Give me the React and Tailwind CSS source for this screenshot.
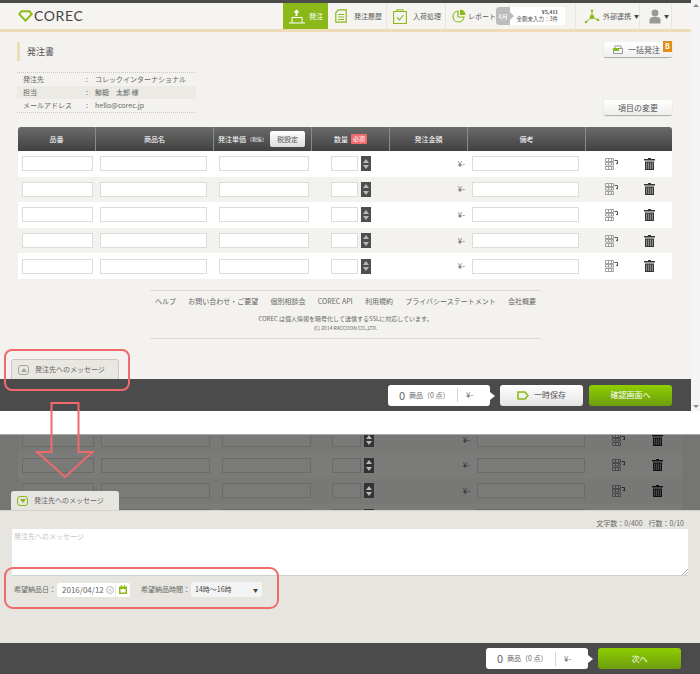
import React from "react";

const rows = [0, 1, 2, 3, 4];

function Spinner({ dim }) {
  return (
    <div className={`w-[10px] h-[15px] flex flex-col items-center justify-around py-[1px] ${dim ? "bg-[#333333]" : "bg-[#4e4e4e]"}`}>
      <span className="w-0 h-0 border-x-[3px] border-x-transparent border-b-[4px] border-b-[#b8b8b8]" />
      <span className="w-0 h-0 border-x-[3px] border-x-transparent border-t-[4px] border-t-[#b8b8b8]" />
    </div>
  );
}

function SplitIcon({ color = "#a0a0a0", arrow = "#555555" }) {
  return (
    <svg width="13" height="12" viewBox="0 0 13 12" fill="none" stroke={color} strokeWidth="1">
      <path d="M0.500 0.500h8v3h-8zM0.500 4.500h8v2.500h-8zM0.500 8.500h8v3h-8zM3.500 0.500v3M6.500 0.500v3M3.500 4.500v2.500M6.500 4.500v2.500M3.500 8.500v3M6.500 8.500v3" />
      <path d="M9.500 2.500h3v3.500M12.500 6l-1.500-1" stroke={arrow} />
    </svg>
  );
}

function TrashIcon({ color = "#333333", fill = "#8c8c8c" }) {
  return (
    <svg width="11" height="12" viewBox="0 0 11 12">
      <path d="M4 0h3v1h4v1.500H0V1h4z" fill={color} />
      <rect x="1.500" y="4" width="8" height="7.500" fill={fill} stroke={color} />
      <path d="M3.500 4v7.500M5.500 4v7.500M7.500 4v7.500" stroke={color} strokeWidth="0.8" />
    </svg>
  );
}

function Field({ className }) {
  return <div className={`h-[15px] bg-white border border-[#dcdcd8] ${className}`} />;
}

function OrderRow({ even }) {
  return (
    <div className={`grid grid-cols-[78px_118px_98px_78px_78px_118px_86px] items-center flex-1 ${even ? "bg-[#f3f2ee]" : "bg-white"}`}>
      <div className="pl-[4px]"><Field className="w-[71px]" /></div>
      <div className="pl-[4px]"><Field className="w-[107px]" /></div>
      <div className="pl-[5px]"><Field className="w-[90px]" /></div>
      <div className="pl-[19px] flex items-center gap-[3px]">
        <Field className="w-[27px]" />
        <Spinner />
      </div>
      <div className="pr-[3px] text-right text-[8px] text-[#666666]">¥-</div>
      <div className="pl-[4px]"><Field className="w-[107px]" /></div>
      <div className="pl-[19px] flex items-center gap-[26px]">
        <SplitIcon />
        <TrashIcon />
      </div>
    </div>
  );
}

function DimRow({ even, last }) {
  const box = "h-[15px] bg-[#7a7a78] border border-[#6a6a68]";
  return (
    <div className={`h-[25.5px] shrink-0 grid grid-cols-[80px_122px_100px_80px_77px_108px_97px] items-center ${even ? "bg-[#787876]" : "bg-[#7b7b79]"}`}>
      <div className="pl-[4px]"><div className={`${box} w-[72px]`} /></div>
      <div className="pl-[3px]"><div className={`${box} w-[109px]`} /></div>
      <div className="pl-[2px]"><div className={`${box} w-[89px]`} /></div>
      <div className="pl-[12px] flex items-center gap-[3px]">
        <div className={`${box} w-[29px]`} />
        <Spinner dim />
      </div>
      <div className="pr-[7px] text-right text-[8px] text-[#2c2c2c]">{last ? "" : "¥-"}</div>
      <div><div className={`${box} w-[108px]`} /></div>
      <div className="pl-[27px] flex items-center gap-[27px]">
        <SplitIcon color="#4a4a4a" arrow="#2c2c2c" />
        <TrashIcon color="#111111" fill="#444444" />
      </div>
    </div>
  );
}

function NavItem({ icon, label, className = "" }) {
  return (
    <div className={`h-full flex items-center border-r border-[#e6e5e0] ${className}`}>
      {icon}
      <span className="text-[7px] text-[#5c5c5c] whitespace-nowrap">{label}</span>
    </div>
  );
}

function Summary({ className = "" }) {
  return (
    <div className={`relative h-[21px] w-[102px] bg-white rounded-[3px] flex items-center text-[#666666] ${className}`}>
      <span className="ml-[11px] w-[9px] text-[11px] leading-none">0</span>
      <span className="ml-[1px] w-[48px] text-[7px] whitespace-nowrap">商品（0 点）</span>
      <span className="h-[14px] border-l border-[#d4d4d4]" />
      <span className="ml-[8px] text-[8px]">¥-</span>
      <span className="absolute left-full top-[7px] w-0 h-0 border-y-[4px] border-y-transparent border-l-[5px] border-l-white" />
    </div>
  );
}

function GreenButton({ label, className = "" }) {
  return (
    <div className={`h-[21px] w-[83px] rounded-[3px] bg-gradient-to-b from-[#8fce00] to-[#6c9e0c] flex items-center justify-center text-[8px] text-white ${className}`}>
      {label}
    </div>
  );
}

function Logo() {
  return (
    <div className="flex items-center gap-[1px] ml-[18px]">
      <svg width="15" height="12" viewBox="0 0 15 12" fill="none" stroke="#8cbc12" strokeWidth="2">
        <path d="M3.500 1.200h8l2.200 3L7.500 10.600 1.300 4.200z" />
      </svg>
      <span className="text-[14px] leading-none tracking-[0.6px] text-[#444444] font-['Lato',sans-serif]">COREC</span>
    </div>
  );
}

export default function App() {
  return (
    <div className="relative w-[700px] h-[674px] overflow-hidden bg-white font-['Noto_Sans_CJK_JP','Liberation_Sans',sans-serif]">
      {/* upper capture */}
      <div className="h-[411px] flex">
        <div className="w-[691px] flex flex-col bg-[#f3f2ee]">
          <div className="h-[3px] bg-[#4b4b4b]" />
          <div className="h-[26px] flex items-center bg-[#f5f4f1]">
            <div className="w-[283px]"><Logo /></div>
            <div className="h-full w-[45px] bg-[#8cb91a] flex items-center pl-[6px] gap-[3px]">
              <svg width="17" height="15" viewBox="0 0 17 15" fill="none" stroke="white" strokeWidth="1">
                <path d="M0 14h16M3 14V8.500h10V14" />
                <path d="M7.500 7V3" strokeWidth="2" />
                <path d="M4.500 3.500L7.500 0.500l3 3z" fill="white" stroke="none" />
              </svg>
              <span className="text-[7px] text-white whitespace-nowrap">発注</span>
            </div>
            <NavItem
              className="w-[59px] pl-[7px] gap-[7px]"
              label="発注履歴"
              icon={
                <svg width="12" height="14" viewBox="0 0 12 14" fill="none" stroke="#8cb91a" strokeWidth="1.2">
                  <path d="M3.500 0.800h7.700v12.400H0.800V3.500zM3 5.500h6M3 8h6M3 10.500h6" />
                </svg>
              }
            />
            <NavItem
              className="w-[59px] pl-[6px] gap-[6px]"
              label="入荷処理"
              icon={
                <svg width="14" height="15" viewBox="0 0 14 15" fill="none" stroke="#8cb91a" strokeWidth="1.1">
                  <path d="M0.600 2.500h12.800v12H0.600zM4 2.500V0.800h6v1.700M4 8.500l2.500 2.500 4-5" />
                </svg>
              }
            />
            <div className="h-full w-[130px] flex items-center border-r border-[#e6e5e0] pl-[6px]">
              <svg width="14" height="14" viewBox="0 0 14 14" fill="none" stroke="#8cb91a" strokeWidth="1.2">
                <path d="M6 2a5.500 5.500 0 1 0 6 6H6z" />
                <path d="M8 0.500a5.500 5.500 0 0 1 5.500 5.500H8z" fill="#8cb91a" stroke="none" />
              </svg>
              <span className="ml-[2px] w-[28px] text-[7px] text-[#5c5c5c] whitespace-nowrap">レポート</span>
              <div className="h-[18px] w-[69px] rounded-[3px] bg-white flex overflow-hidden">
                <div className="relative w-[14px] bg-[#bdbdbd] flex items-center justify-center text-[6px] text-white whitespace-nowrap">
                  4月
                </div>
                <span className="w-0 h-0 self-center border-y-[4px] border-y-transparent border-l-[4px] border-l-[#bdbdbd]" />
                <div className="flex-1 flex flex-col items-end justify-center pr-[7px] text-[#555555] leading-[7px]">
                  <span className="text-[6px] font-bold font-['Liberation_Serif',serif]">¥5,411</span>
                  <span className="text-[5.500px] whitespace-nowrap">金額未入力：3件</span>
                </div>
              </div>
            </div>
            <div className="h-full w-[64px] flex items-center border-r border-[#e6e5e0] pl-[8px] gap-[3px]">
              <svg width="16" height="15" viewBox="0 0 16 15" fill="#8cb91a" stroke="#8cb91a">
                <path d="M8 2v6M8 8L2 13M8 8l6 3" strokeWidth="1" fill="none" />
                <circle cx="8" cy="1.800" r="1.200" stroke="none" />
                <circle cx="8" cy="8" r="2.200" stroke="none" />
                <circle cx="2" cy="13" r="1.300" stroke="none" />
                <circle cx="14" cy="11" r="1.300" stroke="none" />
              </svg>
              <span className="text-[7px] text-[#5c5c5c] whitespace-nowrap">外部連携</span>
              <span className="text-[5px] text-[#444444]">▼</span>
            </div>
            <div className="h-full w-[32px] flex items-center border-r border-[#e6e5e0] pl-[9px] gap-[3px]">
              <svg width="12" height="15" viewBox="0 0 12 15" fill="#999999">
                <circle cx="6" cy="4" r="3.400" />
                <path d="M0.500 14.500V10.500Q1 8 4 8h4q3 0 3.500 2.500v4z" />
              </svg>
              <span className="text-[5px] text-[#444444]">▼</span>
            </div>
          </div>
          <div className="h-[3px] bg-[#eedcb9]" />

          <div className="flex-1 flex flex-col pl-[17px] pt-[10px]">
            <div className="flex justify-between items-start">
              <div className="h-[19px] border-l-[3px] border-[#eedcb9] pl-[7px] flex items-center text-[9px] text-[#555555]">発注書</div>
              <div className="relative mr-[19px] h-[15px] w-[68px] rounded-[2px] bg-gradient-to-b from-white to-[#eeeeee] shadow-[0_1px_1px_#aaaaaa] flex items-center pl-[9px] gap-[5px] text-[8px] text-[#555555] whitespace-nowrap">
                <svg width="10" height="9" viewBox="0 0 10 9" fill="none">
                  <path d="M0.500 3.500h9v5h-9zM2 3.500V1h6v2.500" stroke="#999999" />
                  <rect x="0" y="3" width="6" height="3" fill="#8cb91a" />
                </svg>
                一括発注
                <span className="absolute right-0 -top-[1px] w-[9px] h-[11px] bg-[#de8f14] text-white text-[7px] leading-[10px] text-center font-bold">B</span>
              </div>
            </div>
            <div className="flex justify-between items-end mt-[11px]">
              <div className="w-[179px] border-y border-dotted border-[#c9c9c4] text-[7px] text-[#666666]">
                {[
                  ["発注先", "コレックインターナショナル", ""],
                  ["担当", "鯨椴　太郎 様", "bg-[#ebeae4]"],
                  ["メールアドレス", "hello@corec.jp", ""],
                ].map(([k, v, bg]) => (
                  <div key={k} className={`h-[13px] flex items-center pl-[6px] whitespace-nowrap ${bg}`}>
                    <span className="w-[63px]">{k}</span>
                    <span className="w-[9px]">:</span>
                    <span>{v}</span>
                  </div>
                ))}
              </div>
              <div className="mr-[19px] -mb-[2px] h-[15px] w-[68px] rounded-[2px] bg-gradient-to-b from-white to-[#eeeeee] shadow-[0_1px_1px_#aaaaaa] flex items-center justify-center text-[8px] text-[#555555] whitespace-nowrap">項目の変更</div>
            </div>

            <div className="mt-[14px] ml-[1px] w-[654px] h-[152px] flex flex-col">
              <div className="h-[24px] shrink-0 rounded-t-[3px] bg-gradient-to-b from-[#6b6b6b] to-[#414141] grid grid-cols-[78px_118px_98px_78px_78px_118px_86px] text-[7px] text-white whitespace-nowrap">
                <div className="flex items-center justify-center border-r border-[#8a8a8a]">品番</div>
                <div className="flex items-center justify-center border-r border-[#8a8a8a]">商品名</div>
                <div className="flex items-center pl-[4px] border-r border-[#8a8a8a]">
                  発注単価<span className="ml-[1px] w-[21px] text-[5px]">（税抜）</span>
                  <span className="ml-[2px] h-[16px] w-[35px] rounded-[2px] bg-gradient-to-b from-white to-[#dddddd] text-[#555555] flex items-center justify-center">税設定</span>
                </div>
                <div className="flex items-center justify-center gap-[3px] border-r border-[#8a8a8a]">
                  数量<span className="h-[10px] px-[2px] rounded-[1px] bg-[#ef6a6c] text-[6px] leading-[10px]">必須</span>
                </div>
                <div className="flex items-center justify-center border-r border-[#8a8a8a]">発注金額</div>
                <div className="flex items-center justify-center border-r border-[#8a8a8a]">備考</div>
                <div />
              </div>
              {rows.map((i) => <OrderRow key={i} even={i % 2 === 1} />)}
            </div>

            <div className="mt-[11px] ml-[133px] w-[391px] border-y border-[#dcdbd6] h-[49px] flex flex-col items-center text-[#666666]">
              <div className="w-full flex justify-between px-[5px] pt-[3px] text-[7px] leading-[14px]">
                {["ヘルプ", "お問い合わせ・ご要望", "個別相談会", "COREC API", "利用規約", "プライバシーステートメント", "会社概要"].map((t) => (
                  <span key={t} className="whitespace-nowrap">{t}</span>
                ))}
              </div>
              <div className="mt-[6px] text-[6px] leading-[9px]">COREC は個人情報を暗号化して送信するSSLに対応しています。</div>
              <div className="text-[5px] leading-[9px]">(C) 2014 RACCOON CO.,LTD.</div>
            </div>

            <div className="mt-auto -ml-[6px] w-[108px] h-[20px] rounded-t-[3px] border border-b-0 border-[#c9c8c2] bg-[#e9e7e1] flex items-center pl-[6px] gap-[6px] text-[7px] text-[#666666] whitespace-nowrap">
              <span className="w-[11px] h-[10px] rounded-[3px] border border-[#a5a5a0] flex items-center justify-center">
                <span className="w-0 h-0 border-x-[3px] border-x-transparent border-b-[4px] border-b-[#a5a5a0]" />
              </span>
              発注先へのメッセージ
            </div>
          </div>

          <div className="h-[32px] shrink-0 bg-[#4b4b4b] flex items-center pl-[388px]">
            <Summary />
            <div className="ml-[10px] h-[21px] w-[83px] rounded-[3px] bg-gradient-to-b from-white to-[#e4e4e4] flex items-center justify-center gap-[5px] text-[8px] text-[#555555]">
              <svg width="12" height="9" viewBox="0 0 12 9" fill="none" stroke="#8cb91a" strokeWidth="1.6">
                <path d="M1 1h7l3 3.500L8 8H1z" />
              </svg>
              一時保存
            </div>
            <GreenButton label="確認画面へ" className="ml-[6px]" />
          </div>
        </div>
        <div className="w-[9px] bg-[#f4f4f4] flex flex-col items-center justify-between pt-[4px] pb-[3px]">
          <span className="w-0 h-0 border-x-[3px] border-x-transparent border-b-[3px] border-b-[#8a8a8a]" />
          <span className="w-0 h-0 border-x-[3px] border-x-transparent border-t-[3px] border-t-[#8a8a8a]" />
        </div>
      </div>

      <div className="h-[23px]" />

      {/* lower capture */}
      <div className="h-[240px] flex flex-col">
        <div className="relative h-[76px] overflow-hidden bg-[#757573] border-t border-[#a9a9a7] shrink-0">
          <div className="ml-[18px] w-[664px] -mt-[8px] flex flex-col">
            {[0, 1, 2, 3].map((i) => <DimRow key={i} even={i % 2 === 0} last={i === 3} />)}
          </div>
          <div className="absolute left-[11px] bottom-0 w-[108px] h-[19px] rounded-t-[3px] bg-[#e7e5e0] flex items-center pl-[6px] gap-[6px] text-[7px] text-[#666666] whitespace-nowrap">
            <span className="w-[11px] h-[10px] rounded-[3px] border border-[#8cb91a] flex items-center justify-center">
              <span className="w-0 h-0 border-x-[3px] border-x-transparent border-t-[4px] border-t-[#8cb91a]" />
            </span>
            発注先へのメッセージ
          </div>
        </div>
        <div className="flex-1 bg-[#e7e5e0] border-t border-[#d2d1cc] pl-[12px] pr-[12px]">
          <div className="h-[18px] flex justify-end items-end pb-[1px] pr-[4px] text-[7px] leading-[10px] text-[#666666] gap-[6px] whitespace-nowrap">
            <span>文字数：0/400</span>
            <span>行数：0/10</span>
          </div>
          <div className="relative h-[47px] bg-white border-b border-[#d2d1cc] rounded-[1px] pl-[2px] text-[7px] leading-[14px] text-[#c4c4c4]">
            発注先へのメッセージ
            <svg className="absolute right-0 bottom-0" width="6" height="6" viewBox="0 0 6 6" stroke="#999999" strokeWidth="0.8">
              <path d="M0 6L6 0M3 6l3-3" />
            </svg>
          </div>
          <div className="mt-[6px] h-[15px] pl-[2px] flex items-center text-[7px] text-[#666666] whitespace-nowrap">
            <span>希望納品日：</span>
            <div className="ml-[1px] w-[73px] h-[14px] rounded-[2px] bg-white flex items-center">
              <span className="ml-[5px] w-[44px] text-[8px]">2016/04/12</span>
              <span className="w-[8px] h-[8px] rounded-full border border-[#bbbbbb] text-[6px] leading-[6px] text-center text-[#aaaaaa]">×</span>
              <span className="ml-[1px] h-full pl-[3px] border-l border-[#e5e5e5] flex items-center">
                <svg width="8" height="9" viewBox="0 0 8 9" fill="#8cb91a">
                  <path d="M0 1.500h2V0h1v1.500h2V0h1v1.500h2V9H0zM1.500 4v3.500h5V4z" fillRule="evenodd" />
                </svg>
              </span>
            </div>
            <span className="ml-[11px]">希望納品時間：</span>
            <div className="ml-[1px] w-[71px] h-[15px] rounded-[2px] bg-[#f4f4f4] flex items-center justify-between px-[4px] text-[#444444]">
              <span>14時～16時</span>
              <span className="text-[5px]">▼</span>
            </div>
          </div>
        </div>
        <div className="h-[31px] shrink-0 bg-[#4b4b4b] flex items-center pl-[486px]">
          <Summary />
          <GreenButton label="次へ" className="ml-[10px]" />
        </div>
      </div>

      {/* red annotations */}
      <div className="absolute left-[4px] top-[349px] w-[126px] h-[42px] rounded-[8px] border-2 border-[#ee6a6c]" />
      <div className="absolute left-[4px] top-[567px] w-[275px] h-[42px] rounded-[9px] border-2 border-[#ee6a6c]" />
      <svg className="absolute left-[34px] top-[400px]" width="62" height="80" viewBox="0 0 62 80" fill="none" stroke="#ee6a6c" strokeWidth="2">
        <path d="M17.500 3h27v49h14L31 77 3 52h14.500z" />
      </svg>
    </div>
  );
}
